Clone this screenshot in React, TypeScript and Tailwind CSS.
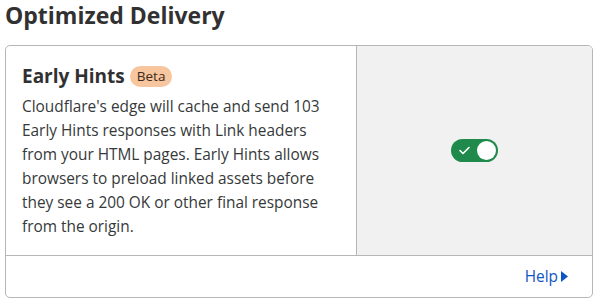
export default function App() {
  return (
    <div className="h-[303px] w-[599px] bg-white px-[5px] pt-0 font-['Open_Sans','Noto_Sans',sans-serif] text-[#36393a]">
      <h2 className="h-[45px] pt-[1px] text-[23px] font-bold leading-[28px] text-[#313131]">Optimized Delivery</h2>
      <div className="w-[588px] overflow-hidden rounded-[5px] border border-[#b6b6b6]">
        <div className="flex h-[210px] border-b border-[#b6b6b6]">
          <div className="w-[351px] border-r border-[#b6b6b6] pl-[16px] pr-3 pt-[18px]">
            <div className="flex items-center gap-[5px]">
              <h3 className="text-[19px] font-bold leading-[24px] text-[#313131]">Early Hints</h3>
              <span className="rounded-full bg-[#f7c69e] px-[7px] text-[13.5px] leading-[21px] text-[#3b2a1c]">Beta</span>
            </div>
            <p className="mt-[7px] w-[318px] text-[15.4px] leading-[24px]">
              Cloudflare's edge will cache and send 103 Early Hints responses with Link headers from your HTML pages. Early Hints allows browsers to preload linked assets before they see a 200 OK or other final response from the origin.
            </p>
          </div>
          <div className="flex flex-1 items-center justify-center bg-[#f2f1f2]">
            <button className="flex h-[23px] w-[47px] items-center justify-between rounded-full bg-[#1f8a4c] pl-[8px] pr-[2px]">
              <svg width="11" height="9" viewBox="0 0 11 9" fill="none">
                <path d="M1 4.5 L4 7.5 L10 1.5" stroke="white" strokeWidth="1.6" strokeLinecap="round" strokeLinejoin="round" />
              </svg>
              <span className="h-[19px] w-[19px] rounded-full bg-white"></span>
            </button>
          </div>
        </div>
        <div className="flex h-[41px] items-center justify-end pr-[24px]">
          <a className="flex items-center gap-[3px] text-[15.4px] text-[#0f55c3]" href="#">
            Help
            <svg width="7" height="11" viewBox="0 0 7 11">
              <path d="M0 0 L7 5.5 L0 11 Z" fill="#0f55c3" />
            </svg>
          </a>
        </div>
      </div>
    </div>
  )
}
